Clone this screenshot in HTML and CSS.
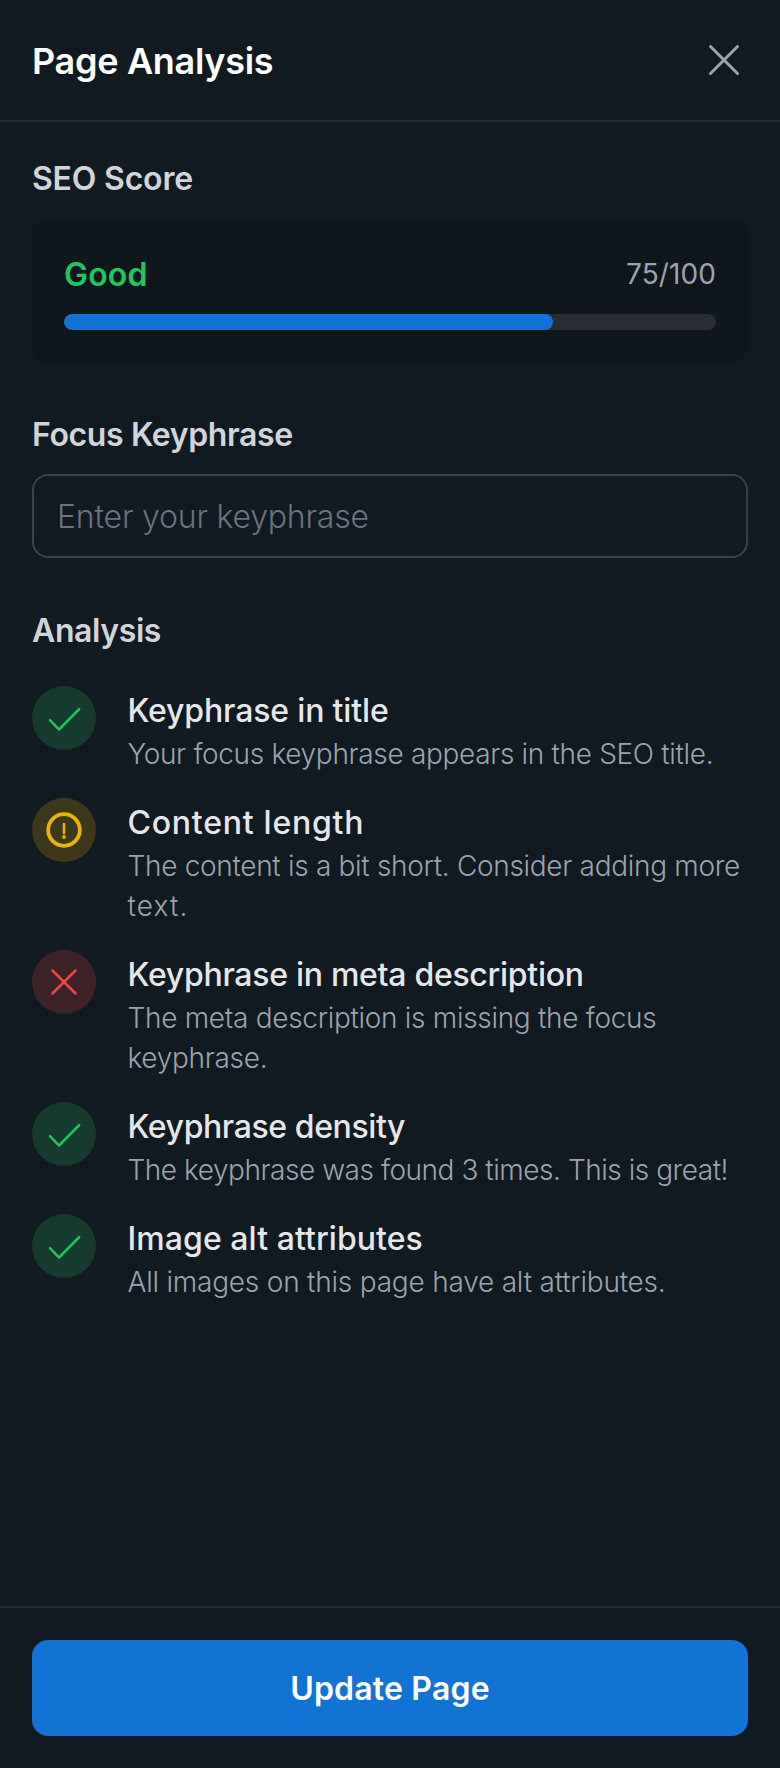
FILE: index.html
```
<!DOCTYPE html>
<html lang="en">
<head>
<meta charset="utf-8">
<title>Page Analysis</title>
<link rel="stylesheet" href="styles.css">
</head>
<body>
<div class="panel">
  <header class="header">
    <h1 class="header-title">Page Analysis</h1>
    <button class="close" aria-label="Close">
      <svg width="56" height="56" viewBox="0 0 56 56" fill="none" stroke="currentColor" stroke-width="3" stroke-linecap="round"><path d="M14.5 14.5 41.5 41.5M41.5 14.5 14.5 41.5"/></svg>
    </button>
  </header>

  <main class="content">
    <section class="section">
      <h2 class="label t-score">SEO Score</h2>
      <div class="card">
        <div class="card-row">
          <span class="rating">Good</span>
          <span class="points">75/100</span>
        </div>
        <div class="track"><div class="fill" style="width: 75%"></div></div>
      </div>
    </section>

    <section class="section">
      <label class="label t-focus" for="keyphrase">Focus Keyphrase</label>
      <input class="input" id="keyphrase" type="text" placeholder="Enter your keyphrase">
    </section>

    <section class="section section-list">
      <h2 class="label t-analysis">Analysis</h2>
      <ul class="list">
        <li class="item">
          <span class="badge good"><svg width="64" height="64" viewBox="0 0 64 64"><path d="M18 34.2 27 43.5 47.2 23.2"/></svg></span>
          <div class="text">
            <p class="title t-in-title">Keyphrase in title</p>
            <p class="desc d-in-title">Your focus keyphrase appears in the SEO title.</p>
          </div>
        </li>
        <li class="item">
          <span class="badge warn"><svg width="64" height="64" viewBox="0 0 64 64"><circle class="ring" cx="32" cy="32" r="15.8"/><path d="M32 26V35"/><circle class="dot" cx="32" cy="39" r="1.9"/></svg></span>
          <div class="text">
            <p class="title t-length">Content length</p>
            <p class="desc d-length">The content is a bit short. Consider adding more <span class="d-length-end">text.</span></p>
          </div>
        </li>
        <li class="item">
          <span class="badge bad"><svg width="64" height="64" viewBox="0 0 64 64"><path d="M20.5 20.5 43.5 43.5M43.5 20.5 20.5 43.5"/></svg></span>
          <div class="text">
            <p class="title t-meta">Keyphrase in meta description</p>
            <p class="desc d-meta">The meta description is missing the focus keyphrase.</p>
          </div>
        </li>
        <li class="item">
          <span class="badge good"><svg width="64" height="64" viewBox="0 0 64 64"><path d="M18 34.2 27 43.5 47.2 23.2"/></svg></span>
          <div class="text">
            <p class="title t-density">Keyphrase density</p>
            <p class="desc d-density">The keyphrase was found 3 times. This is great!</p>
          </div>
        </li>
        <li class="item">
          <span class="badge good"><svg width="64" height="64" viewBox="0 0 64 64"><path d="M18 34.2 27 43.5 47.2 23.2"/></svg></span>
          <div class="text">
            <p class="title t-alt">Image alt attributes</p>
            <p class="desc d-alt">All images on this page have alt attributes.</p>
          </div>
        </li>
      </ul>
    </section>
  </main>

  <footer class="footer">
    <button class="update">Update Page</button>
  </footer>
</div>
</body>
</html>
```
FILE: styles.css
```
* { box-sizing: border-box; margin: 0; padding: 0; }

body {
  background: #111921;
  font-family: Inter, "Liberation Sans", sans-serif;
  -webkit-font-smoothing: antialiased;
}

.panel { display: flex; flex-direction: column; min-height: 1768px; }

.header {
  display: flex;
  align-items: center;
  justify-content: space-between;
  height: 122px;
  padding: 0 28px 0 32px;
  border-bottom: 2px solid #1f2933;
}
.header-title {
  padding-top: 2px;
  font-size: 36px;
  font-weight: 600;
  line-height: 56px;
  letter-spacing: -0.3px;
  color: #fff;
}
.close {
  display: flex;
  border: 0;
  background: none;
  color: #9ca3af;
}

.content { display: flex; flex: 1; flex-direction: column; gap: 48px; padding: 32px; }
.section { display: flex; flex-direction: column; gap: 16px; }
.section-list { gap: 32px; }
.label {
  margin-bottom: -1px;
  padding-top: 1px;
  font-size: 32px;
  font-weight: 600;
  line-height: 48px;
  color: #d1d5db;
}

.card { padding: 32px; border-radius: 16px; background: #0f171d; }
.card-row { display: flex; align-items: center; justify-content: space-between; }
.rating {
  margin-bottom: -1px;
  padding-top: 1px;
  font-size: 32px;
  font-weight: 600;
  line-height: 48px;
  letter-spacing: 0.2px;
  color: #22c55e;
}
.points { font-size: 28px; line-height: 40px; color: #9ca3af; letter-spacing: 0.1px; }
.track { height: 16px; margin-top: 16px; border-radius: 8px; background: #272d33; overflow: hidden; }
.fill { height: 100%; border-radius: 8px; background: #1173d4; }

.input {
  width: 100%;
  height: 84px;
  padding: 0 23px;
  border: 2px solid #374151;
  border-radius: 16px;
  background: transparent;
  color: #e5e7eb;
  font: 300 32px/48px Inter, "Liberation Sans", sans-serif;
  letter-spacing: -0.2px;
}
.input::placeholder { color: #6b7280; opacity: 1; }

.list { display: flex; flex-direction: column; gap: 24px; list-style: none; }
.item { display: flex; align-items: flex-start; gap: 31.5px; }
.badge { flex: none; width: 64px; height: 64px; border-radius: 50%; }
.badge svg {
  display: block;
  fill: none;
  stroke: currentColor;
  stroke-width: 2.5;
  stroke-linecap: round;
  stroke-linejoin: round;
}
.badge .ring { stroke-width: 3.8; }
.badge .dot { fill: currentColor; stroke: none; }
.good { background: rgba(34, 197, 94, 0.2); color: #22c55e; }
.warn { background: rgba(234, 179, 8, 0.2); color: #eab308; }
.bad { background: rgba(239, 68, 68, 0.2); color: #ef4444; }

.text { flex: 1; min-width: 0; margin-right: -8px; }
.title {
  margin-bottom: -1px;
  padding-top: 1px;
  font-size: 32px;
  font-weight: 500;
  line-height: 48px;
  color: #e5e7eb;
}
.desc { font-size: 28px; font-weight: 300; line-height: 40px; color: #9ca3af; }

/* Per-string tracking */
.t-score { letter-spacing: -0.2px; }
.t-focus { letter-spacing: -0.37px; }
.t-analysis { letter-spacing: -0.4px; }
.t-in-title { letter-spacing: -0.16px; }
.t-length { letter-spacing: 0.75px; }
.t-meta { letter-spacing: -0.29px; }
.t-density { letter-spacing: -0.4px; }
.t-alt { letter-spacing: 0.06px; }
.d-in-title { letter-spacing: -0.33px; }
.d-length { letter-spacing: -0.31px; }
.d-length-end { letter-spacing: 1.15px; }
.d-meta { letter-spacing: -0.3px; }
.d-density { letter-spacing: -0.46px; }
.d-alt { letter-spacing: -0.21px; }

.footer { padding: 32px; border-top: 2px solid #1f2933; }
.update {
  display: block;
  width: 100%;
  height: 96px;
  padding-top: 2px;
  border: 0;
  border-radius: 16px;
  background: #1173d4;
  color: #fff;
  font: 600 32px/48px Inter, "Liberation Sans", sans-serif;
  letter-spacing: 0.2px;
}
```
